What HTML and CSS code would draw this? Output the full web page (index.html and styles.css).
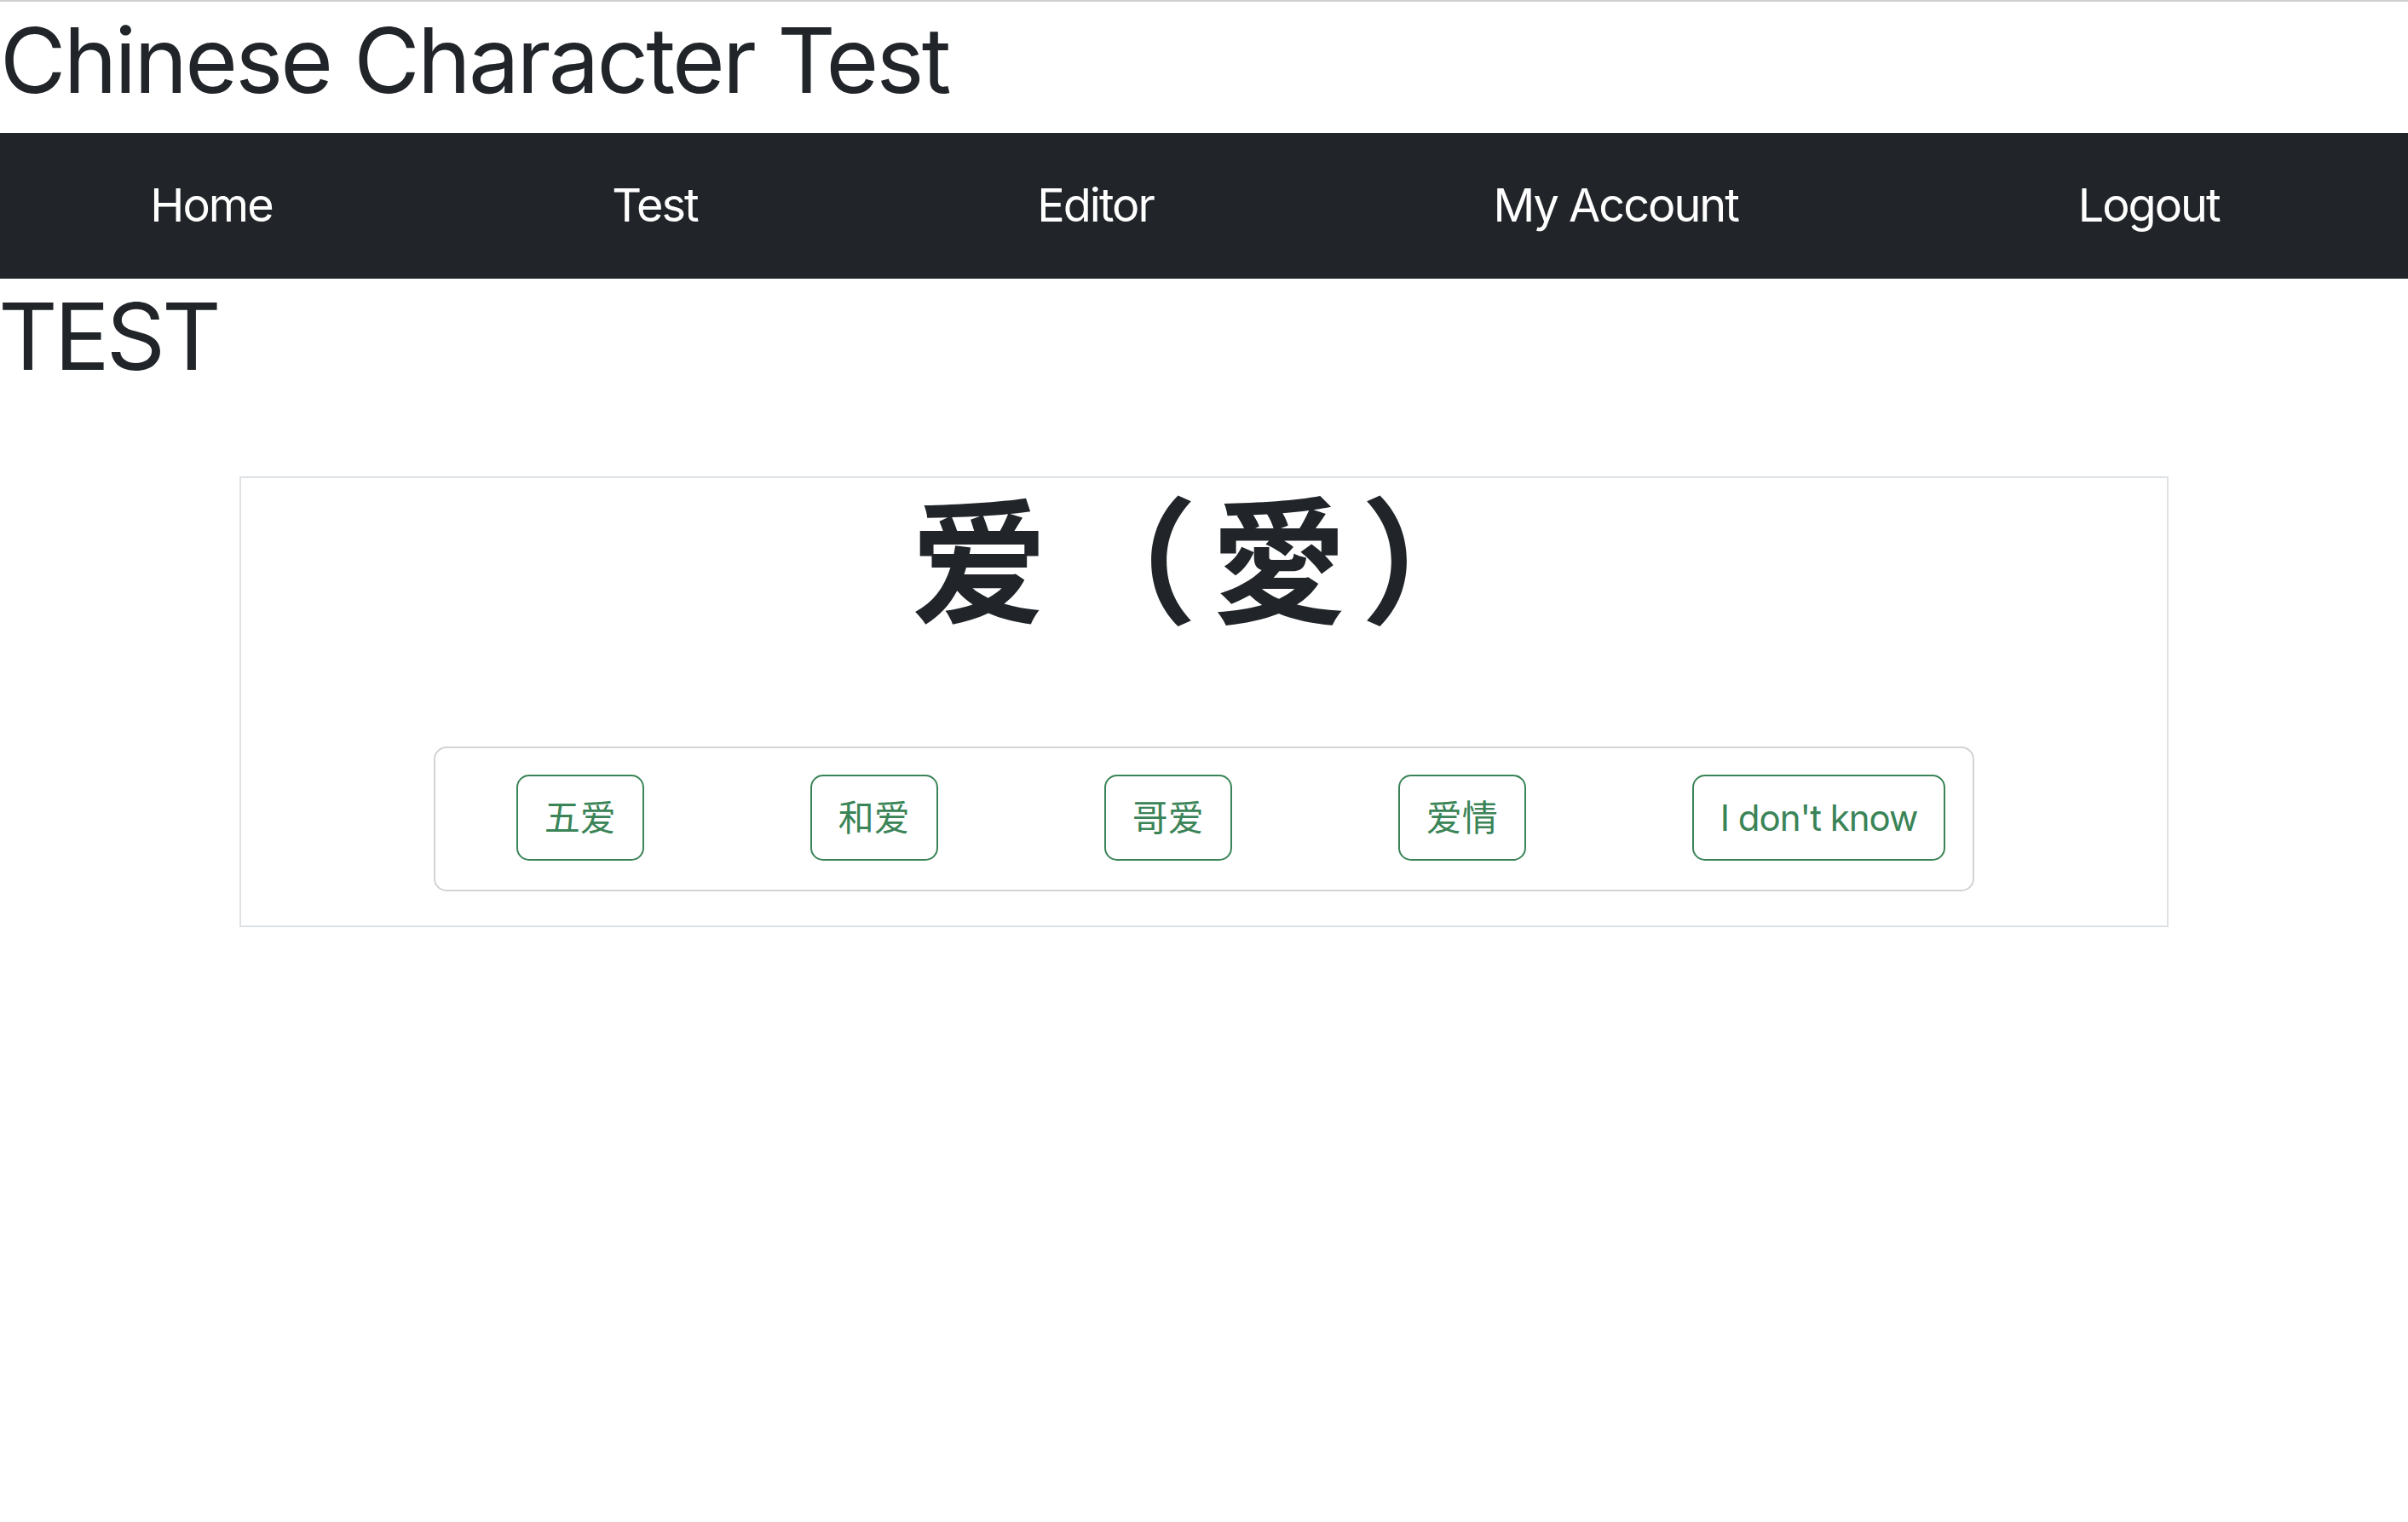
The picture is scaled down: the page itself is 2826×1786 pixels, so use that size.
FILE: index.html
```html
<!DOCTYPE html>
<html lang="zh">
<head>
<meta charset="utf-8">
<title>Chinese Character Test</title>
<link rel="stylesheet" href="styles.css">
</head>
<body>
<h1 class="site-title">Chinese Character Test</h1>
<nav class="navbar">
  <ul class="nav-list">
    <li><a class="nav-link" href="#">Home</a></li>
    <li><a class="nav-link" href="#">Test</a></li>
    <li><a class="nav-link" href="#">Editor</a></li>
    <li><a class="nav-link" href="#">My Account</a></li>
    <li><a class="nav-link" href="#">Logout</a></li>
  </ul>
</nav>
<h2 class="page-title">TEST</h2>
<div class="card">
  <div class="character">爱（愛）</div>
  <div class="choices">
    <button class="choice">五爱</button>
    <button class="choice">和爱</button>
    <button class="choice">哥爱</button>
    <button class="choice">爱情</button>
    <button class="choice choice-text">I don't know</button>
  </div>
</div>
</body>
</html>
```

FILE: styles.css
```css
html, body {
  margin: 0;
  padding: 0;
  background: #fff;
}

body {
  border-top: 2px solid #cfcfcf;
  font-family: Inter, "Noto Sans CJK SC", sans-serif;
  color: #212529;
  overflow-x: hidden;
}

.site-title {
  margin: 5px 0 22px;
  font-size: 106px;
  font-weight: 400;
  line-height: 1.2;
  letter-spacing: -2.8px;
}

.navbar {
  height: 171px;
  background: #212529;
}

.nav-list {
  list-style: none;
  margin: 0 22px 0 -23px;
  padding: 0;
  height: 100%;
  display: flex;
  justify-content: space-around;
  align-items: center;
}

.nav-link {
  color: #fff;
  text-decoration: none;
  font-size: 54px;
  line-height: 1.2;
  letter-spacing: -2px;
}

.page-title {
  margin: 3px 0 99px -2px;
  font-size: 108px;
  font-weight: 400;
  line-height: 1.2;
  letter-spacing: -4px;
}

.card {
  width: 80%;
  margin: 0 auto;
  border: 2px solid #dee2e6;
  padding-bottom: 40px;
}

.character {
  font-family: "Noto Sans CJK SC", sans-serif;
  font-size: 160px;
  font-weight: 700;
  line-height: 1.1;
  letter-spacing: 16px;
  text-indent: 16px;
  text-align: center;
  margin: 0 0 139px;
}

.choices {
  width: 80%;
  margin: 0 auto;
  box-sizing: border-box;
  border: 2px solid #d3d3d3;
  border-radius: 15px;
  padding: 31px 0 34px 95px;
  display: flex;
  align-items: flex-start;
  gap: 195px;
}

.choice {
  font-family: Inter, "Noto Sans CJK SC", sans-serif;
  font-size: 42px;
  line-height: 1.5;
  color: #3a8457;
  background: #fff;
  border: 2px solid #3a8457;
  border-radius: 15px;
  padding: 17px 31px;
}

.choice-text {
  letter-spacing: -1px;
}
```
